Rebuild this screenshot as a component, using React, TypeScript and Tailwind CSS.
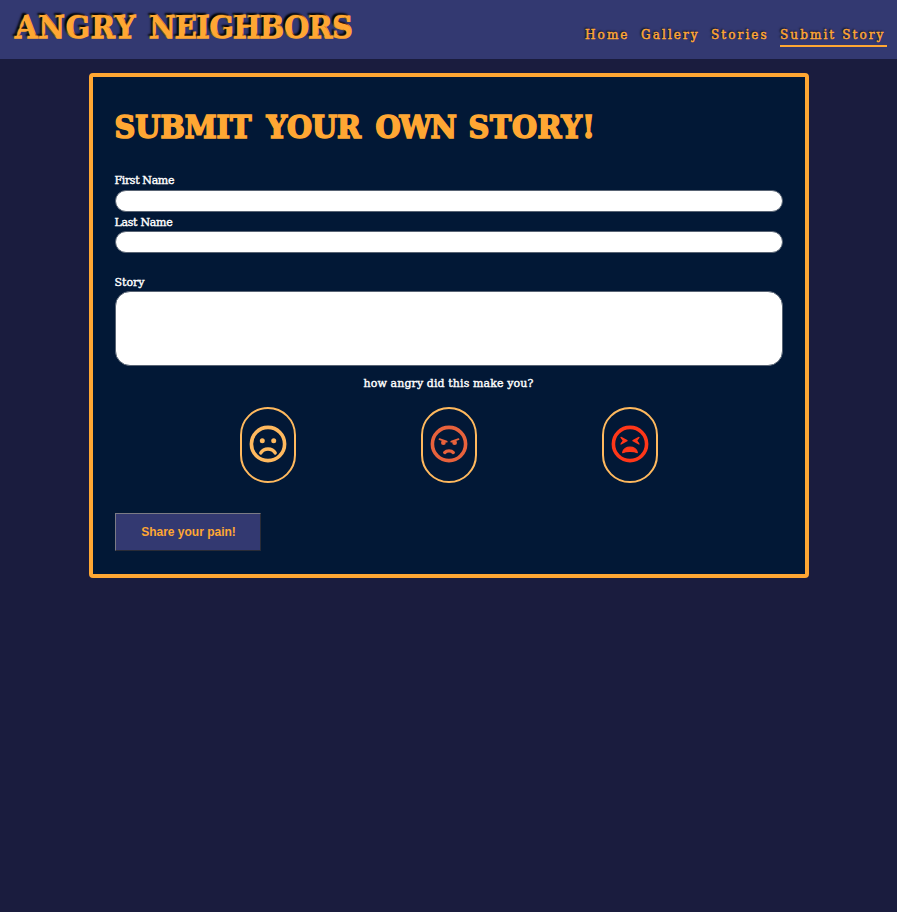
import type { ReactNode } from "react";

const slab = "font-['DejaVu_Serif',serif]";
const display =
  "whitespace-nowrap font-['DejaVu_Serif_Condensed','DejaVu_Serif',serif] [font-stretch:condensed] text-[32px] leading-[42px] font-bold text-[#ffa733] [-webkit-text-stroke:1.6px_#ffa733] [paint-order:stroke_fill]";

const links = [
  { label: "Home", box: "w-[56px]" },
  { label: "Gallery", box: "w-[70px]" },
  { label: "Stories", box: "w-[69px]" },
];

function Face({ children }: { children: ReactNode }) {
  return (
    <svg className="h-[38px] w-[38px] shrink-0" viewBox="-19 -19 38 38" fill="none" stroke="currentColor" strokeLinecap="round" strokeLinejoin="round">
      <circle r="16.6" strokeWidth="3.6" />
      {children}
    </svg>
  );
}

function SadFace() {
  return (
    <Face>
      <circle cx="-5.7" cy="-3.3" r="2.5" fill="currentColor" stroke="none" />
      <circle cx="5.7" cy="-3.3" r="2.5" fill="currentColor" stroke="none" />
      <path d="M-7.2 8.9C-4.2 3.6 4.2 3.6 7.2 8.9" strokeWidth="3.4" />
    </Face>
  );
}

function AngryFace() {
  return (
    <Face>
      <path d="M-9.5 -4.8L-2.3 -2.4M9.5 -4.8L2.3 -2.4" strokeWidth="1.8" />
      <circle cx="-5.6" cy="-1.3" r="2.4" fill="currentColor" stroke="none" />
      <circle cx="5.6" cy="-1.3" r="2.4" fill="currentColor" stroke="none" />
      <path d="M-4.3 8.6C-2.3 6.2 2.3 6.2 4.3 8.6" strokeWidth="3.3" />
    </Face>
  );
}

function TiredFace() {
  return (
    <Face>
      <path d="M-9 -6.6L-3 -3.4L-9 0L-6.6 -3.4ZM9 -6.6L3 -3.4L9 0L6.6 -3.4Z" fill="currentColor" strokeWidth="1.3" />
      <path d="M-7.3 8.6C-6.5 1.3 6.5 1.3 7.3 8.6C4 7 -4 7 -7.3 8.6Z" fill="currentColor" strokeWidth="1.3" />
    </Face>
  );
}

const moods = [
  { name: "Sad", Icon: SadFace, color: "text-[#ffb95e]" },
  { name: "Angry", Icon: AngryFace, color: "text-[#e8623c]" },
  { name: "Furious", Icon: TiredFace, color: "text-[#ff3719]" },
];

export default function App() {
  return (
    <div className={`min-h-screen overflow-hidden bg-[#1a1c3e] text-white ${slab}`}>
      <header className="flex h-[59px] justify-between bg-[#333971] text-[#ffa733]">
        <div className={`ml-[15px] mt-[6px] flex [text-shadow:-2px_-2px_2px_#000] ${display}`}>
          <span className="w-[134px] tracking-[0.8px]">ANGRY </span>
          <span className="tracking-[-0.6px]">NEIGHBORS</span>
        </div>
        <nav className="mr-[10px] mt-[25px] flex h-[22px] whitespace-nowrap text-[12px] leading-[20px] tracking-[2.1px] [text-shadow:-1px_-1px_2px_#000] [-webkit-text-stroke:0.45px_#ffa733]">
          {links.map((l) => (
            <a key={l.label} className={l.box}>{l.label}</a>
          ))}
          <a className="w-[107px] border-b-2 border-[#ffa733]">Submit Story</a>
        </nav>
      </header>
      <main className="mx-auto mt-[14px] h-[505px] w-[720px] rounded-[4px] border-4 border-[#ffa733] bg-[#021836] px-[22px] pt-[29px]">
        <h1 className={`flex h-[67px] ${display}`}>
          <span className="w-[152px]">SUBMIT </span>
          <span className="w-[109px] tracking-[-0.1px]">YOUR </span>
          <span className="w-[93px] tracking-[-1.2px]">OWN </span>
          <span className="tracking-[0.6px]">STORY!</span>
        </h1>
        <form className="text-[11px] leading-[16px] [-webkit-text-stroke:0.4px_white]">
          <label className="block h-[17px] tracking-[-0.35px]">First Name</label>
          <input className="block h-[22px] w-full rounded-[11px] border border-[#596474] bg-white" />
          <label className="mt-[3px] block h-[16px] tracking-[-0.3px]">Last Name</label>
          <input className="block h-[22px] w-full rounded-[11px] border border-[#596474] bg-white" />
          <label className="mt-[22px] block h-[16px]">Story</label>
          <textarea className="block h-[75px] w-full resize-none rounded-[15px] border border-[#596474] bg-white" />
          <p className="mt-[10px] text-center tracking-[0.1px]">how angry did this make you?</p>
          <div className="mt-[15px] flex justify-center gap-[125px]">
            {moods.map(({ name, Icon, color }) => (
              <button key={name} type="button" aria-label={name} className={`flex h-[76px] w-[56px] items-center justify-center rounded-[28px] border-2 border-[#ffb95e] pb-[3px] ${color}`}>
                <Icon />
              </button>
            ))}
          </div>
          <button type="button" className="mt-[30px] block h-[38px] w-[146px] border border-t-[#7b7b85] border-r-[#292b36] border-b-[#292b36] border-l-[#7b7b85] bg-[#333971] pl-[2px] font-['Liberation_Sans',Arial,sans-serif] text-[12px] font-bold text-[#ffa733] [-webkit-text-stroke:0px]">
            Share your pain!
          </button>
        </form>
      </main>
    </div>
  );
}
